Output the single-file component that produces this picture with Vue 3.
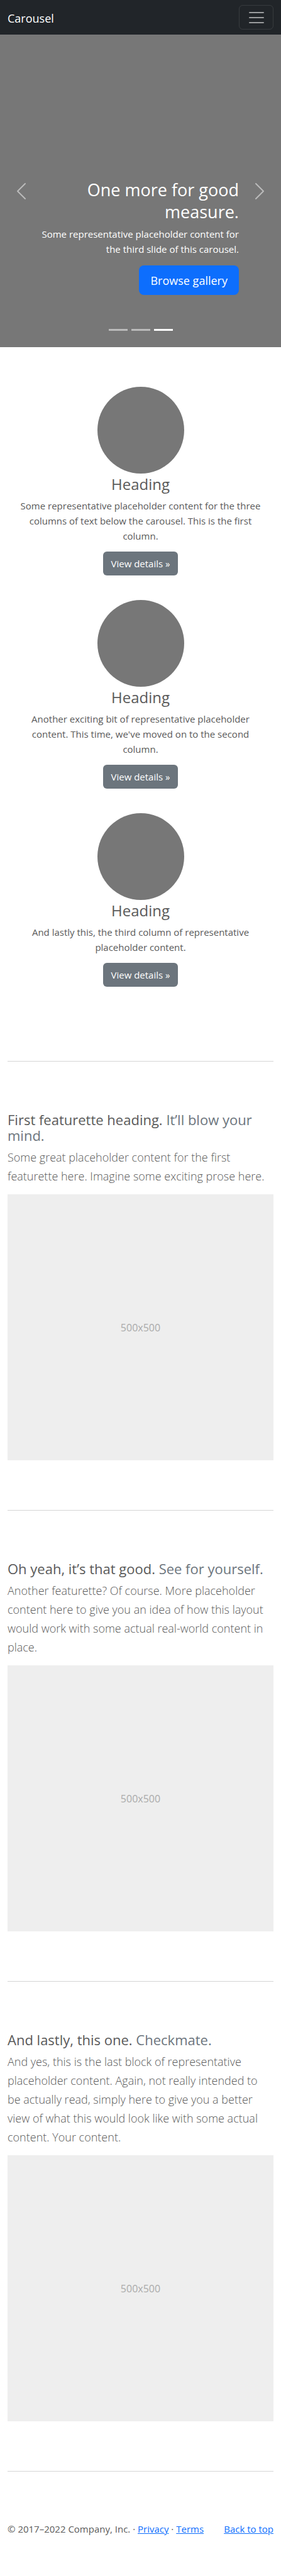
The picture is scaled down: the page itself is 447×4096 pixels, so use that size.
<script setup>
const slides = [1, 2, 3]

const columns = [
  {
    id: 'first',
    text: 'Some representative placeholder content for the three columns of text below the carousel. This is the first column.',
  },
  {
    id: 'second',
    text: "Another exciting bit of representative placeholder content. This time, we've moved on to the second column.",
  },
  {
    id: 'third',
    text: 'And lastly this, the third column of representative placeholder content.',
  },
]

const featurettes = [
  {
    title: 'First featurette heading.',
    tagline: 'It’ll blow your mind.',
    text: 'Some great placeholder content for the first featurette here. Imagine some exciting prose here.',
  },
  {
    title: 'Oh yeah, it’s that good.',
    tagline: 'See for yourself.',
    text: 'Another featurette? Of course. More placeholder content here to give you an idea of how this layout would work with some actual real-world content in place.',
  },
  {
    title: 'And lastly, this one.',
    tagline: 'Checkmate.',
    text: 'And yes, this is the last block of representative placeholder content. Again, not really intended to be actually read, simply here to give you a better view of what this would look like with some actual content. Your content.',
  },
]
</script>

<template>
  <div class="page">
    <header class="navbar">
      <a class="brand" href="#">Carousel</a>
      <button class="toggler" type="button" aria-label="Toggle navigation">
        <svg viewBox="0 0 30 30" aria-hidden="true">
          <path d="M4 7h22M4 15h22M4 23h22" />
        </svg>
      </button>
    </header>

    <main>
      <section class="carousel">
        <button class="arrow" type="button" aria-label="Previous">
          <svg viewBox="0 0 16 16" aria-hidden="true">
            <path d="M11.354 1.646a.5.5 0 0 1 0 .708L5.707 8l5.647 5.646a.5.5 0 0 1-.708.708l-6-6a.5.5 0 0 1 0-.708l6-6a.5.5 0 0 1 .708 0z" />
          </svg>
        </button>
        <div class="caption">
          <h1>One more for good measure.</h1>
          <p>Some representative placeholder content for the third slide of this carousel.</p>
          <a class="btn btn-primary" href="#">Browse gallery</a>
        </div>
        <button class="arrow" type="button" aria-label="Next">
          <svg viewBox="0 0 16 16" aria-hidden="true">
            <path d="M4.646 1.646a.5.5 0 0 1 .708 0l6 6a.5.5 0 0 1 0 .708l-6 6a.5.5 0 0 1-.708-.708L10.293 8 4.646 2.354a.5.5 0 0 1 0-.708z" />
          </svg>
        </button>
        <div class="indicators">
          <button
            v-for="n in slides"
            :key="n"
            type="button"
            :class="{ active: n === 3 }"
            :aria-label="`Slide ${n}`"
          ></button>
        </div>
      </section>

      <div class="container">
        <section class="columns">
          <article v-for="column in columns" :key="column.id" class="column">
            <div class="avatar"></div>
            <h2>Heading</h2>
            <p>{{ column.text }}</p>
            <a class="btn btn-secondary" href="#">View details »</a>
          </article>
        </section>

        <template v-for="item in featurettes" :key="item.title">
          <hr />
          <section class="featurette">
            <h2>{{ item.title }} <span>{{ item.tagline }}</span></h2>
            <p>{{ item.text }}</p>
            <div class="picture">500x500</div>
          </section>
        </template>
        <hr />
      </div>
    </main>

    <footer class="footer">
      <p>© 2017–2022 Company, Inc. · <a href="#">Privacy</a> · <a href="#">Terms</a></p>
      <a href="#">Back to top</a>
    </footer>
  </div>
</template>

<style>
body {
  margin: 0;
  background: #fff;
}
</style>

<style scoped>
.page,
.page * {
  box-sizing: border-box;
}

.page {
  color: #5a5a5a;
  font-family: "Open Sans", "Noto Sans", sans-serif;
  font-size: 15px;
  line-height: 24px;
}

h1,
h2,
p {
  margin: 0;
  font-weight: 400;
}

button {
  padding: 0;
  border: 0;
  background: none;
  cursor: pointer;
}

.navbar {
  display: flex;
  align-items: center;
  justify-content: space-between;
  padding: 8px 12px;
  background: #212529;
}

.brand {
  padding-top: 3px;
  color: #fff;
  font-size: 18px;
  text-decoration: none;
}

.toggler {
  display: flex;
  align-items: center;
  justify-content: center;
  width: 55px;
  height: 39px;
  border: 1px solid rgba(255, 255, 255, 0.1);
  border-radius: 6px;
}

.toggler svg {
  width: 30px;
  height: 30px;
  fill: none;
  stroke: rgba(255, 255, 255, 0.55);
  stroke-linecap: round;
  stroke-miterlimit: 10;
  stroke-width: 2;
}

.carousel {
  position: relative;
  display: grid;
  grid-template-columns: 15% 1fr 15%;
  height: 497px;
  background: #777;
  color: #fff;
}

.arrow {
  display: flex;
  align-items: center;
  justify-content: center;
}

.arrow svg {
  width: 32px;
  height: 32px;
  fill: #fff;
  opacity: 0.5;
}

.caption {
  display: flex;
  flex-direction: column;
  align-items: flex-end;
  justify-content: flex-end;
  margin-left: -12px;
  padding-bottom: 83px;
  text-align: right;
}

.caption h1 {
  margin-bottom: 6px;
  font-size: 27px;
  line-height: 35px;
}

.caption p {
  margin-bottom: 14px;
}

.btn {
  display: inline-block;
  border-radius: 6px;
  color: #fff;
  text-decoration: none;
}

.btn-primary {
  padding: 12px 18px 11px;
  border-radius: 8px;
  background: #0d6efd;
  font-size: 18px;
}

.btn-secondary {
  padding: 7px 12px;
  background: #6c757d;
}

.indicators {
  position: absolute;
  right: 0;
  bottom: 26px;
  left: 0;
  display: flex;
  gap: 6px;
  justify-content: center;
}

.indicators button {
  width: 30px;
  height: 3px;
  background: #fff;
  opacity: 0.5;
}

.indicators .active {
  opacity: 1;
}

.container {
  padding: 63px 12px 0;
}

.columns {
  display: grid;
  gap: 39px;
}

.column {
  padding: 0 12px;
  text-align: center;
}

.avatar {
  width: 138px;
  height: 138px;
  margin: 0 auto;
  border-radius: 50%;
  background: #777;
}

.column h2 {
  margin-bottom: 5px;
  font-size: 24px;
  line-height: 34px;
}

.column p {
  margin-bottom: 13px;
}

.column .btn {
  vertical-align: top;
}

hr {
  height: 1px;
  margin: 79px 0;
  border: 0;
  background: #d5d5d5;
}

.columns + hr {
  margin-top: 118px;
}

.featurette h2 {
  margin-bottom: 7px;
  padding-top: 1px;
  font-size: 22px;
  line-height: 25px;
}

.featurette h2 span {
  color: #6c757d;
}

.featurette p {
  margin-bottom: 14px;
  padding-right: 8px;
  font-size: 18px;
  font-weight: 300;
  line-height: 30px;
}

.picture {
  display: flex;
  align-items: center;
  justify-content: center;
  aspect-ratio: 1;
  background: #eee;
  color: #aaa;
  font-size: 16px;
}

.footer {
  display: flex;
  justify-content: space-between;
  padding: 0 12px 63px;
}

.footer a {
  color: #0d6efd;
}
</style>
